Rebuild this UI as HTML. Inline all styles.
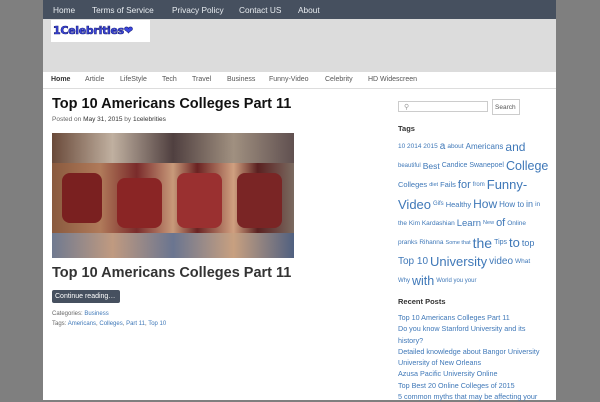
<!DOCTYPE html>
<html><head><meta charset="utf-8"><style>
*{margin:0;padding:0;box-sizing:border-box}
body{width:600px;height:400px;overflow:hidden;background:#7f7f7f;font-family:"Liberation Sans",sans-serif;position:relative}
.page{position:absolute;left:43px;top:0;width:513px;height:400px;background:#fff}
.top{position:absolute;left:0;top:0;width:513px;height:19px;background:#46505f;color:#e8ecf0;font-size:8.3px}
.top span{position:absolute;top:4.5px}
.hdr{position:absolute;left:0;top:19px;width:513px;height:53px;background:#dcdcdc}
.logo{position:absolute;left:8px;top:1px;width:99px;height:22px;background:#fff}
.logo b{position:absolute;left:2px;top:4px;font:bold 11px "DejaVu Sans",sans-serif;color:#3b46e0;-webkit-text-stroke:0.6px #1a1f7a;letter-spacing:-0.3px}
.nav{position:absolute;left:0;top:72px;width:513px;height:17px;border-bottom:1px solid #ddd;font-size:7px;color:#555}
.nav span{position:absolute;top:4px}
.l{color:#3f78b8}
h1{position:absolute;left:9px;font:bold 14.5px "Liberation Sans",sans-serif;color:#111;white-space:nowrap}
.meta{position:absolute;left:9px;top:116px;font-size:6.5px;color:#666}
.meta b{color:#333;font-weight:normal}
.img{position:absolute;left:9px;top:133px;width:242px;height:125px;background:linear-gradient(90deg,#8a5a3e,#b07a5a 20%,#7a2b2b 35%,#c89a7a 50%,#6a2222 60%,#d0a080 75%,#5a2020 85%,#7a6a60);overflow:hidden}
.img i{position:absolute;display:block}
.btn{position:absolute;left:9px;top:290px;width:68px;height:13px;background:#46505f;border-radius:2px;color:#fff;font-size:7px;padding:3px 0 0 3px}
.small{position:absolute;left:9px;font-size:6px;color:#666}
.srch{position:absolute;left:355px;top:101px;width:90px;height:11px;border:1px solid #ccc}
.sbtn{position:absolute;left:449px;top:99px;width:28px;height:16px;border:1px solid #ccc;font-size:6.5px;color:#555;padding:4px 0 0 2px}
.wt{position:absolute;left:355px;font:bold 7.5px "Liberation Sans",sans-serif;color:#333}
.tags{position:absolute;left:355px;top:137px;width:150px;color:#3f78b8}
.tags div{height:19.2px;white-space:nowrap;display:flex;align-items:center;gap:2px}
.rp{position:absolute;left:355px;top:312px;font-size:7.2px;color:#3f78b8;line-height:11.3px}
</style></head><body>
<div class="page">
<div class="top"><span style="left:10px">Home</span><span style="left:49px">Terms of Service</span><span style="left:129px">Privacy Policy</span><span style="left:196px">Contact US</span><span style="left:255px">About</span></div>
<div class="hdr"><div class="logo"><b>1Celebrities❤</b></div></div>
<div class="nav"><span style="left:8px;font-weight:bold;color:#333">Home</span><span style="left:42px">Article</span><span style="left:77px">LifeStyle</span><span style="left:119px">Tech</span><span style="left:149px">Travel</span><span style="left:184px">Business</span><span style="left:226px">Funny-Video</span><span style="left:282px">Celebrity</span><span style="left:325px">HD Widescreen</span></div>
<h1 style="top:96px">Top 10 Americans Colleges Part 11</h1>
<div class="meta">Posted on <b>May 31, 2015</b> by <b>1celebrities</b></div>
<div class="img">
<i style="left:0;top:0;width:242px;height:30px;background:linear-gradient(90deg,#6a4a3a,#c0b0a0,#504040,#a09080,#605050)"></i>
<i style="left:10px;top:40px;width:40px;height:50px;background:#7a2020;border-radius:8px"></i>
<i style="left:65px;top:45px;width:45px;height:50px;background:#8a2525;border-radius:8px"></i>
<i style="left:125px;top:40px;width:45px;height:55px;background:#9a3030;border-radius:8px"></i>
<i style="left:185px;top:40px;width:45px;height:55px;background:#7a2525;border-radius:8px"></i>
<i style="left:0;top:100px;width:242px;height:25px;background:linear-gradient(90deg,#707a90,#c09a80,#6a7590,#c8a080,#506080)"></i>
</div>
<h1 style="top:265px;color:#333">Top 10 Americans Colleges Part 11</h1>
<div class="btn">Continue reading…</div>
<div class="small" style="top:311px">Categories: <span class="l">Business</span></div>
<div class="small" style="top:321px">Tags: <span class="l">Americans</span>, <span class="l">Colleges</span>, <span class="l">Part 11</span>, <span class="l">Top 10</span></div>
<div class="srch"><span style="font-size:7px;color:#999;position:absolute;left:5px;top:1px">⚲</span></div>
<div class="sbtn">Search</div>
<div class="wt" style="top:124px">Tags</div>
<div class="tags">
<div><span style="font-size:6.5px">10 2014 2015</span><span style="font-size:10px">a</span><span style="font-size:6.5px">about</span><span style="font-size:8px">Americans</span><span style="font-size:12px">and</span></div>
<div><span style="font-size:6px">beautiful</span><span style="font-size:8.5px">Best</span><span style="font-size:7px">Candice Swanepoel</span><span style="font-size:12.5px">College</span></div>
<div><span style="font-size:7.5px">Colleges</span><span style="font-size:5.5px">diet</span><span style="font-size:7.5px">Fails</span><span style="font-size:11px">for</span><span style="font-size:6px">from</span><span style="font-size:13px">Funny-</span></div>
<div><span style="font-size:13px">Video</span><span style="font-size:6px">Gifs</span><span style="font-size:7.5px">Healthy</span><span style="font-size:12px">How</span><span style="font-size:8px">How to</span><span style="font-size:9px">in</span><span style="font-size:6.5px">in</span></div>
<div><span style="font-size:6.5px">the Kim Kardashian</span><span style="font-size:9.5px">Learn</span><span style="font-size:5.5px">New</span><span style="font-size:11px">of</span><span style="font-size:6.5px">Online</span></div>
<div><span style="font-size:6.5px">pranks Rihanna</span><span style="font-size:5.5px">Some that</span><span style="font-size:14px">the</span><span style="font-size:7px">Tips</span><span style="font-size:13px">to</span><span style="font-size:9px">top</span></div>
<div><span style="font-size:10px">Top 10</span><span style="font-size:13px">University</span><span style="font-size:10px">video</span><span style="font-size:6.5px">What</span></div>
<div><span style="font-size:6px">Why</span><span style="font-size:12.5px">with</span><span style="font-size:6px">World you your</span></div>
</div>
<div class="wt" style="top:297px">Recent Posts</div>
<div class="rp">Top 10 Americans Colleges Part 11<br>Do you know Stanford University and its<br>history?<br>Detailed knowledge about Bangor University<br>University of New Orleans<br>Azusa Pacific University Online<br>Top Best 20 Online Colleges of 2015<br>5 common myths that may be affecting your</div>
</div>
</body></html>
